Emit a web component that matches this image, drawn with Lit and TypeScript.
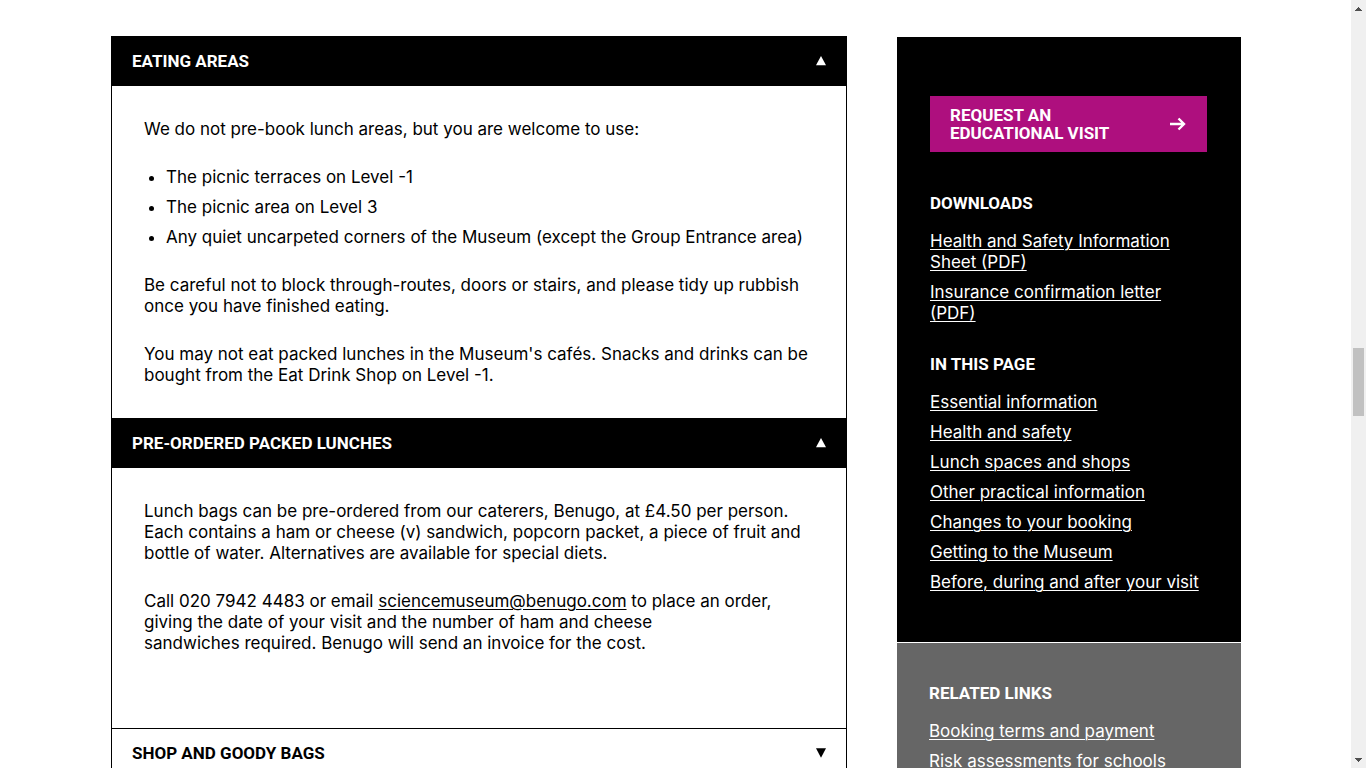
import { LitElement, html, css } from "lit";
import { customElement } from "lit/decorators.js";

const pageLinks = [
  "Essential information",
  "Health and safety",
  "Lunch spaces and shops",
  "Other practical information",
  "Changes to your booking",
  "Getting to the Museum",
  "Before, during and after your visit",
];

const downloads = [
  "Health and Safety Information Sheet (PDF)",
  "Insurance confirmation letter (PDF)",
];

const related = ["Booking terms and payment", "Risk assessments for schools"];

@customElement("app-root")
export class AppRoot extends LitElement {
  static styles = css`
    :host {
      display: flex;
      height: 100vh;
      overflow: hidden;
      background: #fff;
      color: #000;
      font-family: Inter, "Liberation Sans", sans-serif;
      font-size: 17px;
      font-weight: 400;
      line-height: 21px;
    }
    * {
      box-sizing: border-box;
    }
    h2, h3, p, ul {
      margin: 0;
      padding: 0;
    }
    .view {
      flex: 1;
      min-width: 0;
      overflow: hidden;
      padding-left: 1px;
    }
    .columns {
      display: grid;
      grid-template-columns: minmax(0, 736fr) minmax(0, 344fr);
      gap: 50px;
      align-items: start;
      max-width: 1130px;
      margin: 0 auto;
      padding-top: 36px;
    }
    .accordion {
      border: 1px solid #000;
      border-top: 0;
    }
    .toggle {
      display: flex;
      width: 100%;
      height: 50px;
      align-items: center;
      justify-content: space-between;
      border: 0;
      border-top: 1px solid #000;
      padding: 0 20px;
      background: #fff;
      color: #000;
      font: 700 17px/21px Roboto, "Liberation Sans", sans-serif;
      text-transform: uppercase;
      text-align: left;
      cursor: pointer;
    }
    .toggle[aria-expanded="true"] {
      background: #000;
      color: #fff;
    }
    .mark {
      width: 10px;
      height: 11px;
      fill: currentColor;
    }
    .body {
      display: flex;
      flex-direction: column;
      gap: 27px;
      padding: 33px 32px 32px;
    }
    .body.roomy {
      padding-bottom: 74px;
    }
    .bullets {
      display: flex;
      flex-direction: column;
      gap: 9px;
      padding-left: 22px;
    }
    a {
      color: inherit;
      text-underline-offset: 2px;
      text-decoration-thickness: 1px;
    }
    .side {
      padding-top: 1px;
      color: #fff;
    }
    .panel {
      padding: 59px 34px 49px 33px;
      background: #000;
    }
    .panel.related {
      margin-top: 1px;
      padding: 40px 32px;
      background: #666;
    }
    .cta {
      display: flex;
      align-items: center;
      justify-content: space-between;
      margin-bottom: 41px;
      padding: 10px 20px;
      background: #ae0f7e;
      font: 700 17px/18px Roboto, "Liberation Sans", sans-serif;
      text-transform: uppercase;
      text-decoration: none;
    }
    .arrow {
      width: 18px;
      height: 14px;
      fill: none;
      stroke: #fff;
      stroke-width: 2.4;
    }
    .title {
      font: 700 17px/21px Roboto, "Liberation Sans", sans-serif;
      text-transform: uppercase;
    }
    .links {
      display: flex;
      flex-direction: column;
      gap: 9px;
      margin-top: 17px;
      list-style: none;
    }
    .links + .title {
      margin-top: 30px;
    }
    .scrollbar {
      display: grid;
      grid-template-rows: 17px 331fr 68px 335fr 17px;
      justify-items: center;
      align-items: center;
      width: 15px;
      background: #f0f0f0;
    }
    .step {
      width: 7px;
      height: 4px;
      fill: #505050;
    }
    .thumb {
      grid-row: 3;
      width: 11px;
      height: 68px;
      background: #c1c1c1;
    }
    .down {
      grid-row: 5;
    }
  `;

  private header(text: string, open: boolean) {
    return html`<h2>
      <button class="toggle" type="button" aria-expanded=${open ? "true" : "false"}>
        ${text}
        <svg class="mark" viewBox="0 0 10 11" aria-hidden="true">
          <path d=${open ? "M5 0L10 9.3H0z" : "M0 .2H10L5 9.7z"}></path>
        </svg>
      </button>
    </h2>`;
  }

  private list(items: string[]) {
    return html`<ul class="links">
      ${items.map((t) => html`<li><a href="#">${t}</a></li>`)}
    </ul>`;
  }

  render() {
    return html`
      <div class="view">
        <div class="columns">
          <main class="accordion">
            ${this.header("Eating areas", true)}
            <div class="body">
              <p>We do not pre-book lunch areas, but you are welcome to use:</p>
              <ul class="bullets">
                <li>The picnic terraces on Level -1</li>
                <li>The picnic area on Level 3</li>
                <li>Any quiet uncarpeted corners of the Museum (except the Group Entrance area)</li>
              </ul>
              <p>Be careful not to block through-routes, doors or stairs, and please tidy up rubbish once you have finished eating.</p>
              <p>You may not eat packed lunches in the Museum's cafés. Snacks and drinks can be bought from the Eat Drink Shop on Level -1.</p>
            </div>
            ${this.header("Pre-ordered packed lunches", true)}
            <div class="body roomy">
              <p>Lunch bags can be pre-ordered from our caterers, Benugo, at £4.50 per person. Each contains a ham or cheese (v) sandwich, popcorn packet, a piece of fruit and bottle of water. Alternatives are available for special diets.</p>
              <p>Call 020 7942 4483 or email <a href="mailto:sciencemuseum@benugo.com">sciencemuseum@benugo.com</a> to place an order, giving the date of your visit and the number of ham and cheese<br />sandwiches required. Benugo will send an invoice for the cost.</p>
            </div>
            ${this.header("Shop and goody bags", false)}
          </main>
          <aside class="side">
            <section class="panel">
              <a class="cta" href="#">
                <span>Request an<br />educational visit</span>
                <svg class="arrow" viewBox="0 0 18 14" aria-hidden="true">
                  <path d="M1 7H15M9.5 1.5L15 7L9.5 12.5"></path>
                </svg>
              </a>
              <h3 class="title">Downloads</h3>
              ${this.list(downloads)}
              <h3 class="title">In this page</h3>
              ${this.list(pageLinks)}
            </section>
            <section class="panel related">
              <h3 class="title">Related links</h3>
              ${this.list(related)}
            </section>
          </aside>
        </div>
      </div>
      <div class="scrollbar" aria-hidden="true">
        <svg class="step" viewBox="0 0 7 4"><path d="M3 0H4V1H5V2H6V3H7V4H0V3H1V2H2V1H3z"></path></svg>
        <div class="thumb"></div>
        <svg class="step down" viewBox="0 0 7 4"><path d="M0 0H7V1H6V2H5V3H4V4H3V3H2V2H1V1H0z"></path></svg>
      </div>
    `;
  }
}
